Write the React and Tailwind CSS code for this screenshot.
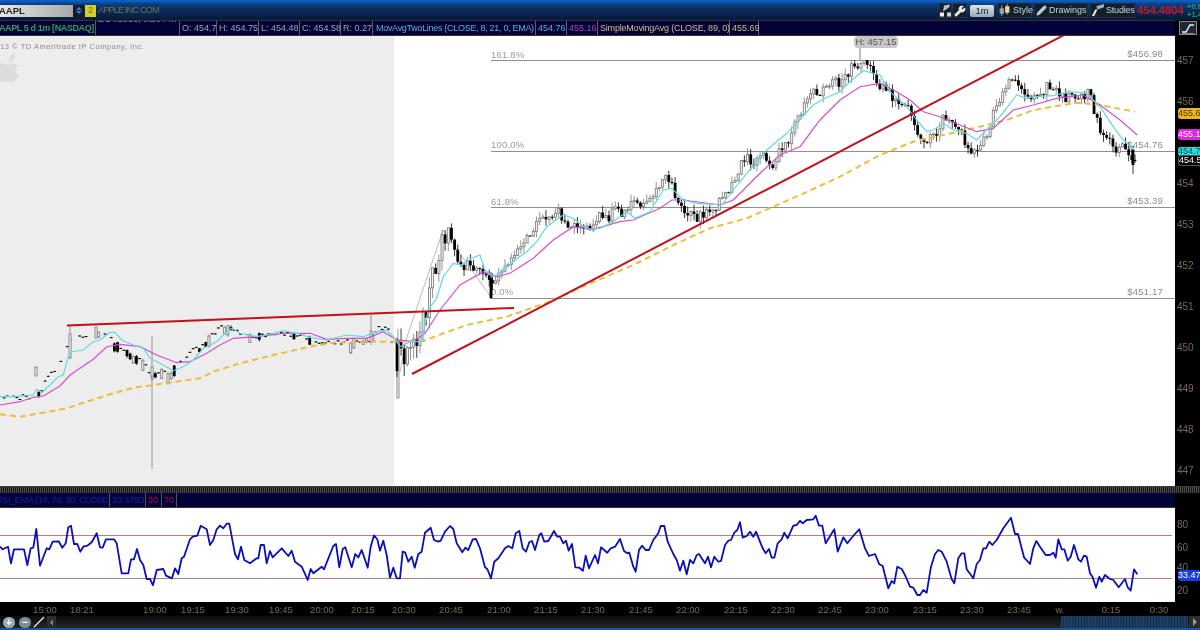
import React from "react";
import { Wrench, Pencil, ChevronLeft } from "lucide-react";

const z = (ox, oy, a) => {
  const r = [];
  for (let i = 0; i < a.length; i += 2) r.push([ox + a[i] / 3, oy + a[i + 1] / 3]);
  return r;
};
const pts = (a) => a.map((p) => p[0].toFixed(1) + "," + p[1].toFixed(1)).join(" ");

const cyan = [
  ...z(0, 300, [0,290,40,290,100,285,110,268,125,278,150,255,175,230,190,225,205,170,215,155,250,150,280,125,300,120,330,97,345,97,365,120,400,135,430,145,450,175,480,190,520,212,550,200,580,180,610,145,650,125,680,95,695,85,720,100,770,110,820,100,850,92,890,100,930,112,980,120,1040,105,1090,110,1130,95,1160,90,1180,110,1200,140]),
  ...z(400, 170, [0,530,30,515,65,515,85,420,110,385,130,320,160,280,185,285,215,265,240,255,255,300,280,320,310,300,345,270,380,245,410,215,440,170,490,135,520,145,560,178,600,175,640,155,680,125,705,145,750,125,790,60,815,55,850,90,890,100,965,105,1000,60,1040,10,1100,-60,1160,-110]),
  ...z(800, 30, [40,225,75,205,120,185,155,150,190,122,240,135,270,185,320,230,350,270,380,305,400,300,430,280,460,300,500,310,530,330,560,300,600,260,650,195,680,205,700,200,760,197,810,185,860,190,900,230,940,290,970,330,1005,360]),
];
const magenta = [
  ...z(0, 300, [0,315,60,305,100,292,130,288,180,258,210,225,280,178,320,140,360,133,420,140,470,165,530,188,570,185,620,160,660,135,700,115,770,110,850,100,930,100,980,118,1040,115,1100,115,1150,95,1200,125]),
  ...z(400, 170, [0,510,40,515,75,490,120,420,180,345,250,305,290,320,330,310,400,265,460,210,520,170,580,178,660,155,700,150,780,115,815,90,850,90,960,105,1000,90,1080,10,1140,-45]),
  ...z(800, 30, [0,350,60,270,120,210,180,170,240,160,290,185,330,210,370,245,420,260,480,285,530,305,580,295,640,240,700,225,770,205,850,195,900,225,960,270,1012,315]),
];
const orange = [
  ...z(0, 300, [0,343,60,350,130,338,200,325,260,305,330,283,400,263,480,252,600,235,640,215,720,190,820,165,930,140,1000,128,1100,125,1170,125]),
  ...z(400, 170, [0,513,70,513,130,490,200,465,320,440,440,398,560,345,700,285,820,225,930,175,1040,145]),
  ...z(800, 30, [0,495,120,440,240,375,340,335,430,315,520,295,620,270,700,240,830,218,900,225,1005,245]),
];
const rsi = [
  ...z(0, 480, [0,200,8,208,24,200,33,250,42,208,72,208,82,255,92,205,100,203,109,147,120,257,140,205,148,208,158,185,176,184,187,203,197,190,205,142,213,137,222,192,232,192,241,215,250,200,262,197,275,187,290,160,300,202,308,203,318,178,342,178,350,190,365,280,385,280,393,238,402,238,411,207,420,240,430,255,440,297,450,297,459,316,470,270,490,267,498,287,516,295,525,265,535,282,545,235,552,230,570,178,578,170,592,167,602,137,620,148,630,195,640,180,650,148,660,137,670,145,680,131,688,131,705,222,714,238,723,200,733,240,750,250,770,235,775,235,782,195,792,195,800,250,810,213,818,232,830,220,845,205,865,228,875,212,885,245,905,260,923,300,932,267,940,280,965,260,972,268,1000,198,1008,192,1018,262,1028,207,1036,202,1055,262,1066,222,1075,232,1085,210,1103,263,1112,200,1122,166,1132,178,1140,212,1150,182,1160,225,1170,293,1180,263,1190,295]),
  ...z(400, 480, [0,295,8,215,16,218,25,245,35,230,44,263,55,222,65,215,75,158,92,143,102,180,115,185,122,182,135,155,150,138,160,147,170,190,187,217,196,203,205,210,218,178,228,177,240,205,255,262,262,267,273,295,283,245,295,235,315,205,325,198,337,205,347,160,358,153,368,205,378,215,388,187,396,183,405,210,418,165,424,160,433,185,445,183,462,153,472,170,480,170,490,190,498,182,506,212,516,192,526,262,538,263,549,272,557,227,567,265,585,225,594,250,603,202,622,218,632,205,645,200,660,177,672,213,682,220,688,218,700,260,707,275,717,210,726,197,737,210,747,210,760,180,775,160,782,138,793,138,803,185,820,222,830,240,840,272,850,242,860,283,870,240,880,250,890,225,897,222,915,250,924,230,933,262,943,230,955,245,963,243,975,195,985,182,993,180,1003,158,1012,150,1020,127,1028,173,1040,168,1050,155,1060,170,1068,155,1088,205,1097,220,1107,207,1115,233,1123,233,1133,190,1145,178,1153,158,1163,175,1180,137,1190,135]),
  ...z(800, 480, [0,122,8,130,20,120,40,118,47,107,57,137,67,137,77,190,103,148,113,215,130,172,142,190,162,165,178,148,195,205,207,228,225,222,238,253,248,258,265,325,275,303,283,310,292,260,305,267,315,285,330,320,340,323,352,345,360,345,370,330,380,338,393,260,405,222,415,210,425,215,440,245,455,298,463,310,475,235,485,220,493,220,500,268,520,295,530,252,540,240,550,205,558,205,568,185,577,195,590,180,610,145,633,113,645,162,654,162,672,232,690,252,700,205,709,183,720,200,737,225,750,225,760,218,767,233,775,178,785,208,793,208,803,242,812,230,822,195,835,238,843,245,852,227,860,230,870,280,878,292,888,323,898,290,905,305,915,285,930,297,940,300,956,322,975,297,983,322,992,332,1002,268,1012,283]),
];

const path = [[0,398],[30,396],[42,392],[47,376],[58,368],[68,342],[76,338],[100,330],[115,342],[125,349],[145,362],[150,372],[170,372],[185,356],[205,342],[222,325],[235,331],[250,335],[300,334],[320,342],[370,340],[378,325],[388,329],[393,345],[402,362],[412,348],[425,310],[435,265],[445,240],[460,262],[475,265],[490,285],[505,265],[525,240],[555,208],[575,225],[585,232],[605,212],[640,210],[665,178],[685,213],[715,212],[735,180],[745,155],[775,165],[800,110],[830,85],[862,65],[880,80],[905,112],[925,140],[945,120],[975,150],[990,125],[1012,75],[1030,97],[1045,90],[1075,95],[1090,100],[1100,130],[1120,145],[1133,165],[1137,158]];
const at = (x) => {
  for (let i = 1; i < path.length; i++) {
    if (x <= path[i][0]) {
      const a = path[i - 1], b = path[i];
      return a[1] + ((b[1] - a[1]) * (x - a[0])) / (b[0] - a[0]);
    }
  }
  return 158;
};
let seed = 1234567;
const rnd = () => {
  seed = (seed + 0x6d2b79f5) | 0;
  let t = Math.imul(seed ^ (seed >>> 15), 1 | seed);
  t = (t + Math.imul(t ^ (t >>> 7), 61 | t)) ^ t;
  return ((t ^ (t >>> 14)) >>> 0) / 4294967296;
};
const candles = [];
let prev = at(0);
for (let x = 1; x < 1138; x += 3.15) {
  const right = x > 395;
  const wild = x > 395 && x < 450;
  if (!right) {
    const c = at(x) + (rnd() - 0.5) * 5;
    const busy = (x > 200 && x < 245) || (x > 340 && x < 392) || (x > 110 && x < 175);
    const r = rnd();
    if (r < (busy ? 0.05 : 0.3)) continue;
    if (r < (busy ? 0.55 : 0.85)) {
      candles.push({ x, o: c, c: c + 1, hi: c, lo: c + 1, up: false });
    } else {
      const h = 3 + rnd() * (busy ? 8 : 5);
      const up = rnd() < 0.5;
      candles.push({ x, o: up ? c + h : c, c: up ? c : c + h, hi: c - rnd() * 2, lo: c + h + rnd() * 2, up });
    }
    continue;
  }
  const swing = Math.sin(x / 7.3) * 3.5 + Math.sin(x / 2.9) * 2.5;
  const close = Math.min(at(x) + swing + (rnd() - 0.5) * (wild ? 26 : 11), 374);
  const o = prev;
  const hi = Math.max(Math.min(o, close) - rnd() * (wild ? 14 : 7), 60);
  const lo = Math.min(Math.max(o, close) + rnd() * (wild ? 14 : 7), 376);
  candles.push({ x, o, c: close, hi: wild ? Math.max(hi, 230) : hi, lo, up: close < o });
  prev = close;
}
const extra = [
  { x: 36, o: 376, c: 367, hi: 367, lo: 376, up: true },
  { x: 70, o: 358, c: 334, hi: 326, lo: 359, up: true },
  { x: 96, o: 338, c: 327, hi: 327, lo: 338, up: true },
  { x: 152, o: 376, c: 367, hi: 336, lo: 469, up: true },
  { x: 371, o: 331, c: 342, hi: 315, lo: 345, up: true },
  { x: 397, o: 342, c: 371, hi: 338, lo: 377, up: false },
  { x: 491, o: 278, c: 298, hi: 272, lo: 299, up: false },
  { x: 1133, o: 150, c: 165, hi: 146, lo: 174, up: false },
];

const Candle = ({ d }) => {
  const y = Math.min(d.o, d.c);
  const h = Math.max(Math.abs(d.o - d.c), 1);
  return (
    <g>
      <line x1={d.x} x2={d.x} y1={d.hi} y2={d.lo} stroke={d.up ? "#8a8a8a" : "#222"} strokeWidth="0.9" />
      {d.up ? (
        <rect x={d.x - 1} y={y} width="2.1" height={h} fill="#f4f4f4" stroke="#777" strokeWidth="0.8" />
      ) : (
        <rect x={d.x - 1.4} y={y} width="2.8" height={h} fill="#000" />
      )}
    </g>
  );
};

const fibs = [
  { y: 60.5, x: 491, l: "161.8%", r: "$456.98", ly: 58, ry: 57 },
  { y: 151.5, x: 491, l: "100.0%", r: "$454.76", ly: 148, ry: 148 },
  { y: 207.5, x: 491, l: "61.8%", r: "$453.39", ly: 205, ry: 204 },
  { y: 298.5, x: 491, l: "0.0%", r: "$451.17", ly: 295, ry: 295 },
];
const prices = [[457,64],[456,105],[454,187],[453,228],[452,269],[451,310],[450,351],[449,392],[448,433],[447,474]];
const times = [["15:00",45],["18:21",82],["19:00",155],["19:15",193],["19:30",237],["19:45",281],["20:00",322],["20:15",363],["20:30",404],["20:45",451],["21:00",499],["21:15",546],["21:30",593],["21:45",641],["22:00",688],["22:15",736],["22:30",783],["22:45",830],["23:00",877],["23:15",925],["23:30",972],["23:45",1019],["w.",1060],["0:15",1111],["0:30",1159]];
const cells = [
  ["O: 454.7", "w-[37px]"],
  ["H: 454.75", "w-[42px]"],
  ["L: 454.48", "w-[41px]"],
  ["C: 454.58", "w-[41px]"],
  ["R: 0.27", "w-[32px]"],
];

const ToolBtn = ({ children, className = "" }) => (
  <div className={"flex h-[15px] items-center gap-[3px] border border-[#22303f] bg-[#141f2c] px-[1px] text-[9px] text-[#c8d0d8] " + className}>
    {children}
  </div>
);

export default function App() {
  return (
    <div className="flex h-[630px] w-[1200px] flex-col overflow-hidden bg-black font-['Liberation_Sans',sans-serif] blur-[0.35px]">
      {/* top bar */}
      <div className="flex h-[20px] items-center bg-[linear-gradient(180deg,#0a62cc_0,#0a56b0_2px,#0c3f80_4px,#0a2c5c_10px,#071a38_20px)] pt-[1px]">
        <div className="flex h-[12px] w-[73px] items-center bg-[linear-gradient(90deg,#e6e6e6,#a8a8a8)] text-[9.5px] font-bold leading-none text-[#222]">
          <span className="-ml-[1px]">AAPL</span>
        </div>
        <div className="flex h-[12px] w-[11px] flex-col items-center justify-center bg-[#111c30]">
          <span className="h-0 w-0 border-x-[3px] border-b-[3px] border-x-transparent border-b-[#3a80d8]" />
          <span className="mt-[1px] h-0 w-0 border-x-[3px] border-t-[3px] border-x-transparent border-t-[#3a80d8]" />
        </div>
        <div className="ml-[1px] flex h-[12px] w-[11px] items-center justify-center bg-[#d8d020] text-[9px] leading-none text-[#666]">2</div>
        <div className="ml-[2px] text-[9px] tracking-[-0.75px] text-[#75704a]">APPLE INC COM</div>
        <div className="ml-auto flex items-center gap-[1px]">
          <ToolBtn className="w-[13px] justify-center !px-0">
            <svg width="12" height="13" viewBox="0 0 11 12">
              <path d="M4 1 L10 0 L9 3 L3 7 Z" fill="#b8c0c8" />
              <rect x="0" y="8" width="4" height="4" fill="#f0f0f0" />
              <rect x="7" y="8" width="4" height="4" fill="#d0d0d0" />
            </svg>
          </ToolBtn>
          <ToolBtn className="w-[14px] justify-center !px-0">
            <Wrench size={12} color="#eeeeee" fill="#eeeeee" />
          </ToolBtn>
          <div className="ml-[2px] flex h-[12px] w-[24px] items-center justify-center rounded-[2px] bg-[linear-gradient(180deg,#dfe5ea,#98a6b4)] text-[9.5px] leading-none text-[#16202c]">1m</div>
          <ToolBtn className="ml-[2px] w-[35px]">
            <svg className="shrink-0" width="11" height="13" viewBox="0 0 10 12">
              <path d="M2.5 1 V11 M7.5 0 V10" stroke="#8aa" strokeWidth="1" />
              <rect x="0.5" y="4" width="4" height="5" fill="#8fa8b8" />
              <rect x="5.5" y="2" width="4" height="6" fill="#e8d890" />
            </svg>
            <span>Style</span>
          </ToolBtn>
          <ToolBtn className="ml-[1px] w-[54px] !gap-[2px]">
            <Pencil className="shrink-0" size={11} color="#c0c8d0" fill="#c0c8d0" />
            <span>Drawings</span>
          </ToolBtn>
          <ToolBtn className="ml-[1px] w-[45px] !gap-[1px] tracking-[-0.2px]">
            <svg className="shrink-0" width="13" height="13" viewBox="0 0 12 12">
              <path d="M4 2 L11 0 L11 3 L5 5 Z" fill="#a8b0b8" />
              <path d="M3 5 L5 5 L2 11 L0 11 Z" fill="#f0f0f0" />
            </svg>
            <span>Studies</span>
          </ToolBtn>
        </div>
        <div className="ml-[2px] w-[50px] text-[11.5px] font-bold leading-none tracking-[-0.2px] text-[#c4182a]">454.4804</div>
        <div className="flex w-[13px] flex-col overflow-hidden whitespace-nowrap text-[7.5px] font-bold leading-[8px] text-[#2c9a50]">
          <span>+0.6</span>
          <span>+1.4</span>
        </div>
      </div>

      {/* study legend row */}
      <div className="flex h-[16px] bg-black">
        <div className="flex w-[1175px] items-stretch overflow-hidden border-y border-[#3a3030] bg-[#03033a] text-[9px] leading-none text-[#9aa4ae]">
          <div className="flex w-[96px] shrink-0 items-center overflow-hidden whitespace-nowrap border-r border-[#6a5c58] font-bold text-[#2f9e5c]">
            <span className="-ml-[1px] tracking-[-0.4px]">AAPL 5 d 1m [NASDAQ]</span>
          </div>
          <div className="w-[84px] shrink-0 overflow-hidden whitespace-nowrap border-r border-[#6a5c58] pl-[2px] text-[#8a94a0]">
            <div className="-mt-[6px]">2/14/2013, 8:26 PM</div>
          </div>
          {cells.map(([t, w]) => (
            <div key={t} className={"flex shrink-0 items-center whitespace-nowrap border-r border-[#6a5c58] pl-[2px] " + w}>
              {t}
            </div>
          ))}
          <div className="flex w-[163px] shrink-0 items-center whitespace-nowrap border-r border-[#6a5c58] pl-[3px] tracking-[-0.3px] text-[#56b4c8]">MovAvgTwoLines (CLOSE, 8, 21, 0, EMA)</div>
          <div className="flex w-[31px] shrink-0 items-center border-r border-[#6a5c58] pl-[2px] text-[#56b4c8]">454.76</div>
          <div className="flex w-[31px] shrink-0 items-center border-r border-[#6a5c58] pl-[2px] text-[#b040b8]">455.16</div>
          <div className="flex w-[132px] shrink-0 items-center whitespace-nowrap border-r border-[#6a5c58] pl-[2px] tracking-[-0.2px] text-[#d4bc7c]">SimpleMovingAvg (CLOSE, 89, 0)</div>
          <div className="flex w-[29px] shrink-0 items-center border-r border-[#6a5c58] pl-[2px] text-[#d4bc7c]">455.69</div>
        </div>
        <div className="flex flex-1 items-center justify-center">
          <div className="flex h-[14px] w-[18px] items-center justify-center border border-[#888] bg-[#1c2a38]">
            <svg width="14" height="11" viewBox="0 0 14 11">
              <path d="M1 9 H5 L9 2 H13" stroke="#f0f0f0" strokeWidth="1.5" fill="none" />
              <path d="M1 10.5 H13" stroke="#aab" strokeWidth="0.7" />
            </svg>
          </div>
        </div>
      </div>

      {/* price chart */}
      <div className="flex h-[450px]">
        <div className="relative flex w-[1175px] overflow-hidden">
          <div className="w-[394px] bg-[#ededed]" />
          <div className="flex-1 bg-white" />
          <div className="absolute left-0 top-[7px] whitespace-nowrap text-[7.5px] leading-none tracking-[0.55px] text-[#8c8c8c]">13 © TD Ameritrade IP Company, Inc.</div>
          <svg className="absolute left-0 top-0" width="1175" height="450" viewBox="0 36 1175 450">
            <path d="M9 63 C9 58 12 54 15 52 C15 57 13 61 9 63 Z" fill="#dcdcdc" />
            <path d="M-6 68 C-1 62 5 63 8 65 C11 64 15 63 18 66 C15 68 14 73 19 75 C17 79 13 83 10 82 C8 81 5 81 3 82 C-2 83 -6 76 -6 68 Z" fill="#dcdcdc" />
            {fibs.map((f) => (
              <g key={f.l}>
                <line x1={f.x} x2="1175" y1={f.y} y2={f.y} stroke="#8f8f8f" strokeWidth="1" />
                <text x={f.x} y={f.ly} fontSize="9.5" fill="#999" letterSpacing="0.2">{f.l}</text>
                <text x="1163" y={f.ry} textAnchor="end" fontSize="9.5" fill="#8c8c8c" letterSpacing="0.2">{f.r}</text>
              </g>
            ))}
            <polyline points="400,372 407,337 443,230 491,297" fill="none" stroke="#aaa" strokeWidth="0.8" />
            {candles.map((d, i) => <Candle key={i} d={d} />)}
            {extra.map((d, i) => <Candle key={"e" + i} d={d} />)}
            <polyline points={pts(orange)} fill="none" stroke="#f0bc3c" strokeWidth="2" strokeDasharray="6 4" />
            <polyline points={pts(magenta)} fill="none" stroke="#d24fd2" strokeWidth="1.2" />
            <polyline points={pts(cyan)} fill="none" stroke="#5cdbe2" strokeWidth="1.2" />
            <line x1="67" y1="325.5" x2="514" y2="308" stroke="#c4101a" strokeWidth="2" />
            <line x1="412" y1="374" x2="1066" y2="34" stroke="#c4101a" strokeWidth="2" />
            <path d="M860 48 V60" stroke="#aaa" strokeWidth="1.5" />
          </svg>
          <div className="absolute left-[854px] top-0 flex h-[12px] w-[44px] items-center justify-center rounded-[4px] bg-[#c8c8c8] text-[9.5px] leading-none text-[#555]">H: 457.15</div>
        </div>
        <div className="relative flex-1 overflow-hidden bg-black">
          <svg className="absolute left-0 top-0" width="25" height="450" viewBox="1175 36 25 450">
            {prices.map(([p, y]) => (
              <text key={p} x="1177" y={y} fontSize="10" fill="#7a6a50">{p}</text>
            ))}
          </svg>
          <div className="absolute left-[3px] top-[72px] h-[11px] w-[22px] rounded-l-[3px] bg-[#eeb41c] text-center text-[9px] leading-[11px] text-[#4a3a08]">455.6</div>
          <div className="absolute left-[3px] top-[93px] h-[11px] w-[22px] rounded-l-[3px] bg-[#e81ee8] text-center text-[9px] leading-[11px] text-white">455.1</div>
          <div className="absolute left-[3px] top-[111px] h-[9px] w-[22px] rounded-l-[3px] bg-[#22dfe0] text-center text-[9px] leading-[9px] text-[#0a4a5a]">454.7</div>
          <div className="absolute left-[3px] top-[119px] h-[11px] w-[22px] rounded-l-[3px] border-y border-l border-[#555] bg-black text-center text-[9px] leading-[9px] text-white">454.5</div>
        </div>
      </div>

      {/* separator */}
      <div className="h-[7px] border-t border-[#4a3c28] bg-[repeating-linear-gradient(90deg,#4a4a4a_0,#4a4a4a_1px,#181818_1px,#181818_2px)]" />

      {/* RSI legend */}
      <div className="flex h-[15px] bg-black">
        <div className="flex w-[1175px] items-stretch overflow-hidden border-b border-[#3a3030] bg-[#03033a] text-[9px] leading-none">
          <div className="flex w-[110px] shrink-0 items-center overflow-hidden whitespace-nowrap border-r border-[#5c5050] text-[#1420a8]">
            <span className="-ml-[4px] tracking-[-0.3px]">RSI_EMA (14, 70, 30, CLOSE)</span>
          </div>
          <div className="flex w-[36px] shrink-0 items-center border-r border-[#5c5050] pl-[2px] text-[#1420a8]">33.4753</div>
          <div className="flex w-[16px] shrink-0 items-center border-r border-[#5c5050] pl-[2px] text-[#a81438]">30</div>
          <div className="flex w-[15px] shrink-0 items-center border-r border-[#5c5050] pl-[2px] text-[#a81438]">70</div>
        </div>
      </div>

      {/* RSI pane */}
      <div className="flex h-[94px]">
        <div className="w-[1175px] bg-white">
          <svg width="1175" height="94" viewBox="0 508 1175 94">
            <line x1="0" x2="1172" y1="535.5" y2="535.5" stroke="#c07c7c" strokeWidth="1" />
            <line x1="0" x2="1172" y1="578.5" y2="578.5" stroke="#c07c7c" strokeWidth="1" />
            <polyline points={pts(rsi)} fill="none" stroke="#0a10b8" strokeWidth="1.8" strokeLinejoin="round" />
          </svg>
        </div>
        <div className="relative flex-1 overflow-hidden bg-black">
          <svg width="25" height="94" viewBox="1175 508 25 94">
            {[[80,528],[60,551],[40,571],[20,594]].map(([p, y]) => (
              <text key={p} x="1177" y={y} fontSize="10" fill="#7a6a50">{p}</text>
            ))}
          </svg>
          <div className="absolute left-[3px] top-[62px] h-[11px] w-[22px] rounded-l-[3px] bg-[#1a3ce8] text-center text-[9px] leading-[11px] text-white">33.47</div>
        </div>
      </div>

      {/* time axis */}
      <div className="h-[14px] overflow-hidden bg-black">
        <svg width="1200" height="14" viewBox="0 602 1200 14">
          {times.map(([t, x]) => (
            <text key={t} x={x} y="613" textAnchor="middle" fontSize="9.5" fill="#7a6a50">{t}</text>
          ))}
        </svg>
      </div>

      {/* bottom bar */}
      <div className="flex h-[12px] items-center bg-[linear-gradient(180deg,#0c0c0c,#262626)]">
        <div className="ml-[3px] flex h-[11px] w-[12px] items-center justify-center rounded-full bg-[#9aa8b4] text-[11px] font-bold leading-none text-white">+</div>
        <div className="ml-[4px] flex h-[11px] w-[12px] items-center justify-center rounded-full bg-[#7e8c98] text-[11px] font-bold leading-none text-white">−</div>
        <svg className="ml-[2px]" width="12" height="12" viewBox="0 0 12 12">
          <line x1="1" y1="11" x2="11" y2="1" stroke="#f0f0f0" strokeWidth="1.3" />
        </svg>
        <div className="ml-[2px] flex h-[12px] w-[9px] items-center justify-center bg-[#2c2c2c]">
          <ChevronLeft size={9} color="#999" fill="#999" />
        </div>
        <div className="ml-[1005px] h-[12px] w-[127px] bg-[repeating-linear-gradient(90deg,#1e3d62_0,#1e3d62_2px,#16304e_2px,#16304e_3px)]" />
        <div className="ml-[1px] flex h-[12px] flex-1 items-center justify-center bg-[#2c2c2c]">
          <span className="h-0 w-0 border-y-[4px] border-l-[4px] border-y-transparent border-l-[#999]" />
        </div>
      </div>
      <div className="h-[2px] bg-[#0c5ab0]" />
    </div>
  );
}
